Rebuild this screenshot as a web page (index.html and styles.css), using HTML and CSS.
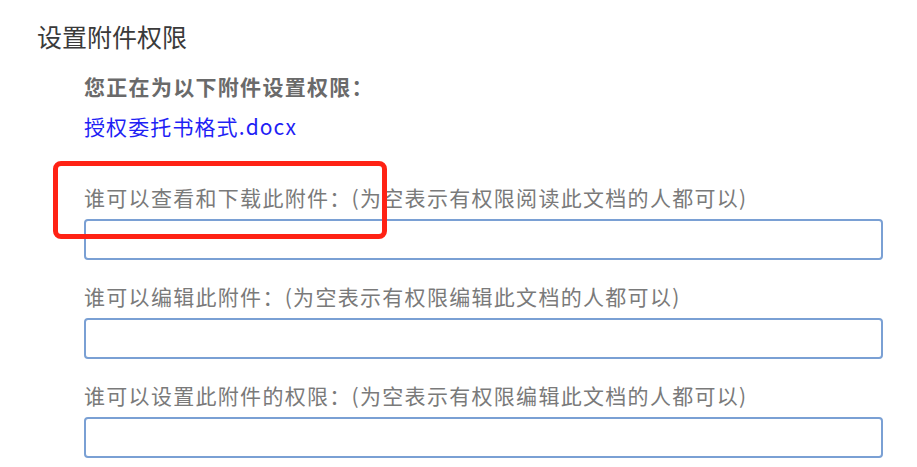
FILE: index.html
```html
<!DOCTYPE html>
<html lang="zh-CN">
<head>
    <meta charset="UTF-8">
    <meta name="viewport" content="width=device-width, initial-scale=1.0">
    <title>设置附件权限</title>
    <link rel="stylesheet" href="styles.css">
</head>
<body>
    <div class="dialog">
        <h2 class="dialog-title">设置附件权限</h2>

        <div class="dialog-body">
            <p class="intro">您正在为以下附件设置权限：</p>
            <a class="file-link" href="#">授权委托书格式.docx</a>

            <div class="field">
                <label class="field-label" for="viewers">谁可以查看和下载此附件：(为空表示有权限阅读此文档的人都可以)</label>
                <input class="field-input" type="text" id="viewers">
            </div>

            <div class="field">
                <label class="field-label" for="editors">谁可以编辑此附件：(为空表示有权限编辑此文档的人都可以)</label>
                <input class="field-input" type="text" id="editors">
            </div>

            <div class="field">
                <label class="field-label" for="admins">谁可以设置此附件的权限：(为空表示有权限编辑此文档的人都可以)</label>
                <input class="field-input" type="text" id="admins">
            </div>
        </div>
    </div>

    <!-- annotation box from the screenshot -->
    <div class="highlight-box"></div>
</body>
</html>
```

FILE: styles.css
```css
* {
    margin: 0;
    padding: 0;
    box-sizing: border-box;
}

body {
    font-family: "Noto Sans CJK SC", "Noto Sans", sans-serif;
    background: #fff;
    width: 917px;
    height: 467px;
    overflow: hidden;
    position: relative;
}

.dialog {
    padding: 18px 0 0 37px;
}

.dialog-title {
    font-size: 25px;
    font-weight: normal;
    line-height: 36px;
    color: #3a3a3a;
}

.dialog-body {
    margin: 12px 0 0 47px;
    width: 799px;
}

.intro {
    font-size: 21px;
    font-weight: bold;
    line-height: 40px;
    color: #6a6a6a;
    letter-spacing: 1.3px;
}

.file-link {
    display: block;
    font-size: 21px;
    line-height: 40px;
    color: #1f1ff5;
    text-decoration: none;
    letter-spacing: 1.1px;
    margin-bottom: 37px;
}

.field {
    margin-bottom: 22px;
}

.field-label {
    display: block;
    font-size: 21px;
    line-height: 28px;
    color: #7a7a7a;
    letter-spacing: 1.3px;
    margin-bottom: 8px;
    white-space: nowrap;
}

.field-input {
    display: block;
    width: 100%;
    height: 41px;
    border: 2px solid #7aa0d4;
    border-radius: 4px;
    background: #fff;
    outline: none;
}

.highlight-box {
    position: absolute;
    left: 53px;
    top: 161px;
    width: 334px;
    height: 78px;
    border: 5px solid #ff2214;
    border-radius: 8px;
}
```
